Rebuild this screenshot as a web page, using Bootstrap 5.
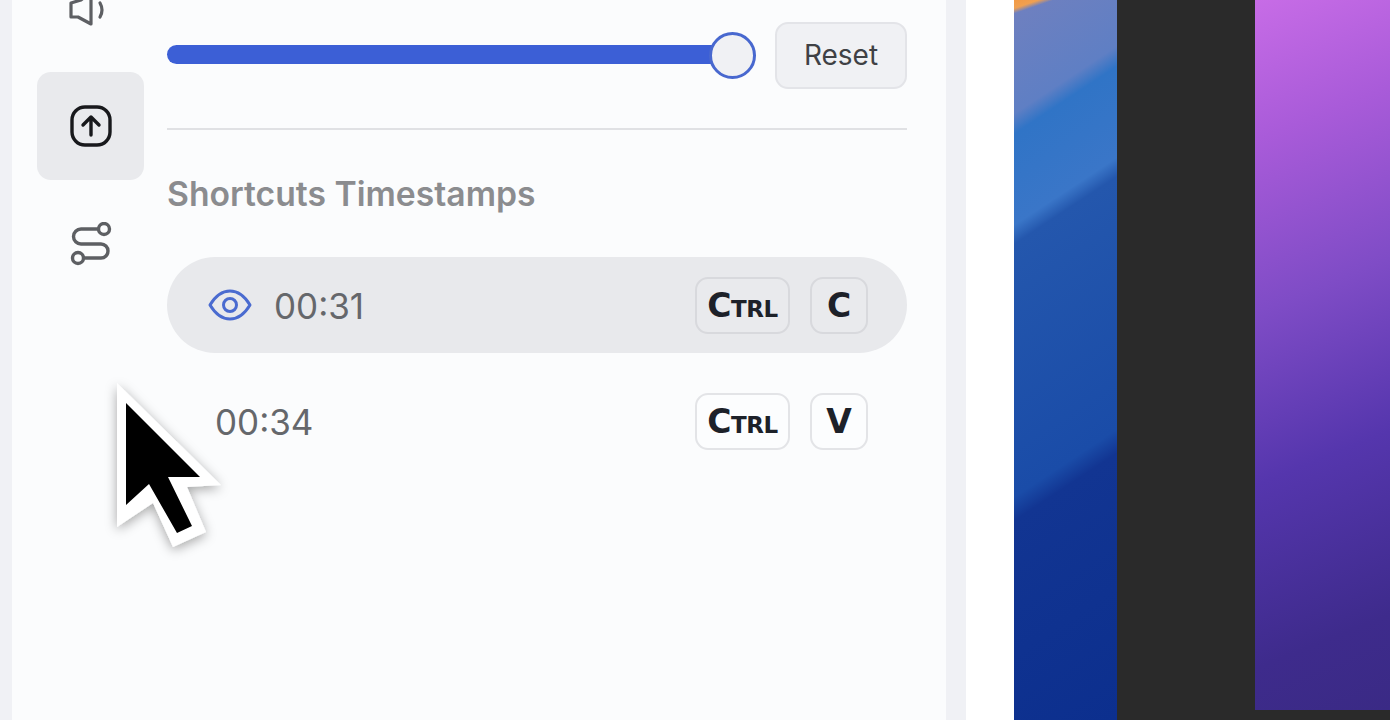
<!DOCTYPE html>
<html lang="en">
<head>
<meta charset="utf-8">
<title>Shortcuts Timestamps</title>
<link href="https://cdn.jsdelivr.net/npm/bootstrap@5.3.0/dist/css/bootstrap.min.css" rel="stylesheet">
<style>
html,body{height:720px;overflow:hidden;background:#fff;font-family:"Inter","Liberation Sans",sans-serif}
.stage{height:720px;width:1390px;background:#f0f1f5}
.panel{margin-left:12px;width:934px;background:#fbfcfd;height:720px}
.rail{width:155px;flex:none;padding-left:25px}
.rail-icon{display:block;width:44px;height:44px;margin:0 auto}
.rail-top{height:72px;overflow:hidden;display:flex;align-items:flex-end;justify-content:center;width:107px}
.rail-speaker{margin-bottom:44px}
.rail-active{width:107px;height:108px;border-radius:14px;background:#e9eaed}
.rail-route{width:107px;margin-top:42px}
.main-col{width:740px;padding-top:22px}
.slide-wrap{height:67px;flex:1}
.slide-track{height:19px;border-radius:10px;background:#3c5fd6;margin-top:23px;width:calc(100% - 20px)}
.slide-thumb{width:47px;height:47px;border-radius:50%;background:#f0f1f4;border:3px solid #4868cf;right:0;top:10px}
.reset-btn{width:132px;height:67px;border-radius:13px;background:#f0f1f4;border:2px solid #e3e4e8;color:#3f4145;font-size:28px;padding:0 0 2px;margin-left:19px}
.sep{margin:39px 0 0;border:0;border-top:2px solid #e0e1e4;opacity:1}
.head-line{font-size:33.7px;font-weight:600;color:#8b8c8f;margin:45px 0 0;line-height:38px}
.time-list{margin-top:44px}
.time-row{height:96px;border-radius:48px;padding:0 39px 0 41px;margin-bottom:20px;color:#65676b;font-size:35px;line-height:1}
.time-row.is-on{background:#e8e9ec}
.clock{padding-top:2px}
.stamp{margin-left:7px}
.eye{width:44px;height:44px;margin-right:22px}
.key-set{gap:20px}
kbd.key{display:flex;align-items:center;justify-content:center;height:57px;min-width:58px;padding:0 11px;border-radius:13px;border:2px solid #e3e4e7;background:#fcfdfe;color:#1d2129;font-family:"DejaVu Sans",sans-serif;font-weight:700;font-variant:small-caps;font-size:33px;line-height:1;box-shadow:none}
.is-on kbd.key{background:#e9eaed;border-color:#d8d9dd}
.key-ctrl{width:95px;letter-spacing:-.5px}
.gutter{width:48px;flex:none;background:#fff;margin-left:20px}
.wall-blue{width:103px;flex:none;background:
 linear-gradient(161deg,#f29a45 0,#f0a050 8px,transparent 13px) no-repeat 0 0/40px 20px,
 linear-gradient(146.6deg,#7080bf 0,#5f7fc4 95px,#3074c6 112px,#3a76c8 188px,#2457ad 204px,#1a4ca8 415px,#123592 435px,#0c2f8e 100%)}
.wall-dark{width:138px;flex:none;background:#2a2a2a}
.wall-tail{background:#2a2a2a}
.wall-purple{height:710px;background:linear-gradient(158deg,#c76ce6 0,#a95bd9 130px,#7f4cc6 290px,#5536ad 450px,#3e2b8c 620px,#3a2a85 100%)}
.pointer{position:absolute;left:0;top:0;width:1390px;height:720px;pointer-events:none;overflow:visible}
</style>
</head>
<body>
<div class="stage d-flex position-relative">
  <div class="panel d-flex">
    <div class="rail">
      <div class="rail-top">
        <svg class="rail-icon rail-speaker" viewBox="0 0 44 44" fill="none" stroke="#5d5f63" stroke-width="3.2" stroke-linecap="round" stroke-linejoin="round"><path d="M2 19L12 16L22 8V40L9 33H2Z"/><path d="M31 19q4 7 0 14"/></svg>
      </div>
      <div class="rail-active d-flex align-items-center justify-content-center">
        <svg class="rail-icon" viewBox="0 0 44 44" fill="none" stroke="#18191c" stroke-width="3.4" stroke-linecap="round" stroke-linejoin="round"><rect x="3" y="3" width="38" height="38" rx="13"/><path d="M22 31V13M14 21l8-8 8 8"/></svg>
      </div>
      <div class="rail-route">
        <svg class="rail-icon" viewBox="0 0 44 44" fill="none" stroke="#5d5f63" stroke-width="3.4" stroke-linecap="round" stroke-linejoin="round"><circle cx="35" cy="7" r="5.5"/><circle cx="9" cy="36" r="5.5"/><path d="M29 7H12a7.5 7.5 0 0 0 0 15H32a7 7 0 0 1 0 14H15"/></svg>
      </div>
    </div>
    <div class="main-col">
      <div class="d-flex">
        <div class="slide-wrap position-relative">
          <div class="slide-track"></div>
          <div class="slide-thumb position-absolute"></div>
        </div>
        <button type="button" class="btn reset-btn">Reset</button>
      </div>
      <hr class="sep">
      <h2 class="head-line">Shortcuts Timestamps</h2>
      <div class="time-list">
        <div class="time-row is-on d-flex align-items-center">
          <svg class="eye" viewBox="0 0 44 44" fill="none" stroke="#4a6bd0" stroke-width="3" stroke-linecap="round" stroke-linejoin="round"><path d="M2 22C8 12 15 8 22 8s14 4 20 14c-6 10-13 14-20 14S8 32 2 22Z"/><circle cx="22" cy="22" r="6.5"/></svg>
          <span class="clock">00:31</span>
          <div class="d-flex key-set ms-auto"><kbd class="key key-ctrl">Ctrl</kbd><kbd class="key">C</kbd></div>
        </div>
        <div class="time-row d-flex align-items-center">
          <span class="clock stamp">00:34</span>
          <div class="d-flex key-set ms-auto"><kbd class="key key-ctrl">Ctrl</kbd><kbd class="key">V</kbd></div>
        </div>
      </div>
    </div>
  </div>
  <div class="gutter"></div>
  <div class="wall-blue"></div>
  <div class="wall-dark"></div>
  <div class="flex-grow-1 wall-tail"><div class="wall-purple"></div></div>
  <svg class="pointer" viewBox="0 0 1390 720">
    <defs><filter id="soft" x="-40%" y="-40%" width="180%" height="180%"><feDropShadow dx="0" dy="3" stdDeviation="6" flood-color="#000" flood-opacity=".35"/></filter></defs>
    <polygon points="117,383 221,485 187,487 206,532 173,547 153,503 117,527" fill="#fff" filter="url(#soft)"/>
    <polygon points="126,403 200,477 168,477 192,526 177,533 149,484 126,505" fill="#000"/>
  </svg>
</div>
</body>
</html>
